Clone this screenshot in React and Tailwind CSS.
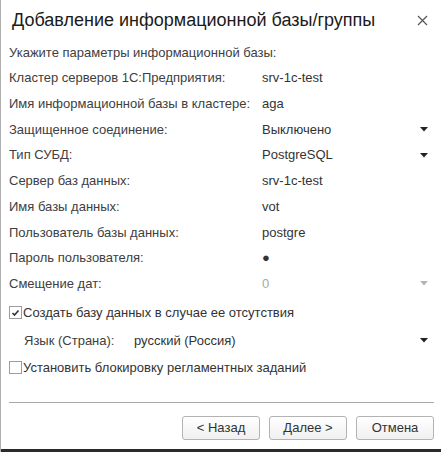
const Arrow = ({ muted }) => (
  <svg width="8" height="5" viewBox="0 0 8 5" className="mr-[13px]">
    <path d="M0 0 H8 L4 4.5 Z" fill={muted ? "#b5b5b5" : "#222"} />
  </svg>
);

const Row = ({ label, value, arrow, muted }) => (
  <div className="flex items-center h-[25.75px]">
    <span className="w-[253px] text-[#404040]">{label}</span>
    <span className={muted ? "flex-1 text-[#a8a8a8]" : "flex-1 text-[#333]"}>{value}</span>
    {arrow && <Arrow muted={muted} />}
  </div>
);

const Check = ({ checked }) => (
  <span className="w-[13px] h-[13px] border border-[#9c9c9c] bg-white flex items-center justify-center">
    {checked && (
      <svg width="9" height="8" viewBox="0 0 9 8">
        <path d="M1.5 4 L3.5 6 L7.5 1.5" stroke="#333" strokeWidth="1.6" fill="none" />
      </svg>
    )}
  </span>
);

const Button = ({ children }) => (
  <button className="w-[78px] h-[24px] rounded-[3px] border border-[#b3b3b3] bg-gradient-to-b from-white to-[#f0f0f0] text-[#333] text-[13px]">
    {children}
  </button>
);

export default function App() {
  return (
    <div
      className="w-[441px] h-[452px] bg-white border-l border-[#b0b0b0] flex flex-col overflow-hidden"
      style={{ fontFamily: '"Liberation Sans", Arial, sans-serif' }}
    >
      {/* header */}
      <div className="flex items-center justify-between h-[41px] pl-[11px] pr-[13px]">
        <h1 className="text-[18px] text-[#1a1a1a]">Добавление информационной базы/группы</h1>
        <svg width="11" height="11" viewBox="0 0 11 11">
          <path d="M1 1 L10 10 M10 1 L1 10" stroke="#555" strokeWidth="1.2" />
        </svg>
      </div>

      <div className="pl-[8px] pr-0 text-[13px] flex-1">
        <div className="h-[24px] flex items-center text-[#404040]">Укажите параметры информационной базы:</div>
        <Row label="Кластер серверов 1С:Предприятия:" value="srv-1c-test" />
        <Row label="Имя информационной базы в кластере:" value="aga" />
        <Row label="Защищенное соединение:" value="Выключено" arrow />
        <Row label="Тип СУБД:" value="PostgreSQL" arrow />
        <Row label="Сервер баз данных:" value="srv-1c-test" />
        <Row label="Имя базы данных:" value="vot" />
        <Row label="Пользователь базы данных:" value="postgre" />
        <Row label="Пароль пользователя:" value="●" />
        <Row label="Смещение дат:" value="0" arrow muted />

        <div className="flex items-center h-[28px] mt-[2px] text-[#333]">
          <Check checked />
          <span className="ml-[1px]">Создать базу данных в случае ее отсутствия</span>
        </div>
        <div className="flex items-center h-[27px] pl-[15px]">
          <span className="w-[110px] text-[#404040]">Язык (Страна):</span>
          <span className="flex-1 text-[#333]">русский (Россия)</span>
          <Arrow />
        </div>
        <div className="flex items-center h-[27px] text-[#333]">
          <Check />
          <span className="ml-[1px]">Установить блокировку регламентных заданий</span>
        </div>
      </div>

      <div className="px-[8px] pr-[7px]">
        <div className="border-t border-[#a8a8a8] mb-[1px]" />
        <div className="flex justify-end gap-[9px] pt-[12px] pb-[9px]">
          <Button>&lt; Назад</Button>
          <Button>Далее &gt;</Button>
          <Button>Отмена</Button>
        </div>
      </div>
      <div className="h-[3px] bg-[#2b2b2b] -ml-px" />
    </div>
  );
}
